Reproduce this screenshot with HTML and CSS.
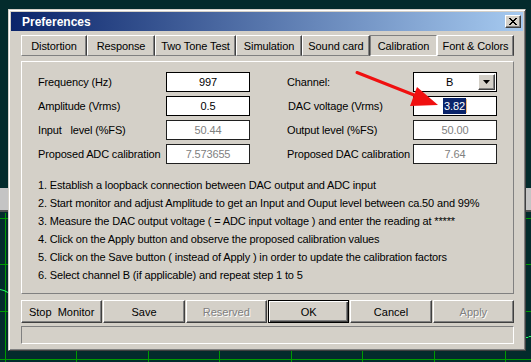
FILE: index.html
```html
<!doctype html>
<html lang="en">
<head>
  <meta charset="utf-8">
  <title>Preferences</title>
  <link rel="stylesheet" href="styles.css">
</head>
<body>
  <div class="desk">
    <svg class="scope" width="531" height="362" viewBox="0 0 531 362">
      <rect x="0" y="188" width="8" height="22" fill="#c4c4c4"/>
      <rect x="0" y="210" width="8" height="2" fill="#505050"/>
      <rect x="525" y="188" width="6" height="22" fill="#c4c4c4"/>
      <rect x="525" y="210" width="6" height="2" fill="#505050"/>
      <g stroke="#009a00" stroke-width="1">
        <line x1="0" y1="218.5" x2="531" y2="218.5"/>
        <line x1="0" y1="264.5" x2="531" y2="264.5"/>
        <line x1="0" y1="311.5" x2="531" y2="311.5"/>
        <line x1="0" y1="359.5" x2="531" y2="359.5"/>
        <line x1="5.5" y1="213" x2="5.5" y2="362"/>
        <line x1="76.5" y1="213" x2="76.5" y2="362"/>
        <line x1="148.5" y1="213" x2="148.5" y2="362"/>
        <line x1="219.5" y1="213" x2="219.5" y2="362"/>
        <line x1="291.5" y1="213" x2="291.5" y2="362"/>
        <line x1="362.5" y1="213" x2="362.5" y2="362"/>
        <line x1="434.5" y1="213" x2="434.5" y2="362"/>
        <line x1="505.5" y1="213" x2="505.5" y2="362"/>
      </g>
      <polyline points="0,289.5 4,290.5 8,292.5" fill="none" stroke="#22ff66" stroke-width="1"/>
      <polyline points="525,337.5 528,337.5 529,336.5 531,336.5" fill="none" stroke="#22ff66" stroke-width="1"/>
    </svg>

    <div class="dialog">
      <div class="titlebar">
        <span>Preferences</span>
        <span class="close">
          <svg width="8" height="7" viewBox="0 0 8 7"><path d="M0 0 L7 7 M1 0 L8 7 M7 0 L0 7 M8 0 L1 7" stroke="#000" stroke-width="1"/></svg>
        </span>
      </div>

      <div class="content">
        <div class="tabs">
          <div class="tab">Distortion</div>
          <div class="tab">Response</div>
          <div class="tab">Two Tone Test</div>
          <div class="tab">Simulation</div>
          <div class="tab">Sound card</div>
          <div class="tab active">Calibration</div>
          <div class="tab">Font &amp; Colors</div>
        </div>

        <div class="panel">
          <div class="fields">
            <label>Frequency (Hz)</label>
            <div class="edit">997</div>
            <label>Channel:</label>
            <div class="combo"><span class="combo-text">B</span><span class="drop"><svg width="7" height="4" viewBox="0 0 7 4"><path d="M0 0 H7 L3.5 4 Z" fill="#000"/></svg></span></div>

            <label>Amplitude (Vrms)</label>
            <div class="edit">0.5</div>
            <label class="pad">DAC voltage (Vrms)</label>
            <div class="edit"><span class="sel">3.82</span><span class="caret"></span></div>

            <label>Input &nbsp; level (%FS)</label>
            <div class="edit off">50.44</div>
            <label>Output level (%FS)</label>
            <div class="edit off">50.00</div>

            <label>Proposed ADC calibration</label>
            <div class="edit off">7.573655</div>
            <label>Proposed DAC calibration</label>
            <div class="edit off">7.64</div>
          </div>

          <ol class="steps">
            <li>1. Establish a loopback connection between DAC output and ADC input</li>
            <li>2. Start monitor and adjust Amplitude to get an Input and Ouput level between ca.50 and 99%</li>
            <li>3. Measure the DAC output voltage ( = ADC input voltage ) and enter the reading at *****</li>
            <li>4. Click on the Apply button and observe the proposed calibration values</li>
            <li>5. Click on the Save button ( instead of Apply ) in order to update the calibration factors</li>
            <li>6. Select channel B (if applicable) and repeat step 1 to 5</li>
          </ol>
        </div>

        <div class="buttons">
          <div class="btn">Stop &nbsp;Monitor</div>
          <div class="btn">Save</div>
          <div class="btn off">Reserved</div>
          <div class="btn default">OK</div>
          <div class="btn">Cancel</div>
          <div class="btn off">Apply</div>
        </div>

        <div class="status"></div>
      </div>
    </div>

    <svg class="arrow" width="531" height="362" viewBox="0 0 531 362">
      <path d="M357 72.5 L414 95" stroke="#f01010" stroke-width="3" stroke-linecap="round"/>
      <polygon points="417,87 410,106 438,105" fill="#f01010"/>
    </svg>
  </div>
</body>
</html>
```

FILE: styles.css
```css
* {
  box-sizing: border-box;
}

body {
  margin: 0;
  background: #032b2c;
  font-family: "Liberation Sans", Arial, sans-serif;
  font-size: 11px;
  color: #000;
}

.desk {
  position: relative;
  width: 531px;
  height: 362px;
  overflow: hidden;
  padding: 9px 0 0 8px;
}

.scope,
.arrow {
  position: absolute;
  left: 0;
  top: 0;
}

.arrow {
  pointer-events: none;
}

.dialog {
  position: relative;
  width: 518px;
  height: 342px;
  background: #d4d0c8;
  border: 1px solid;
  border-color: #d4d0c8 #404040 #404040 #d4d0c8;
  box-shadow: inset 1px 1px #fff, inset -1px -1px #808080;
  padding: 2px;
}

.titlebar {
  height: 19px;
  background: linear-gradient(to right, #0a246a, #a6caf0);
  color: #fff;
  font-weight: bold;
  font-size: 12px;
  display: flex;
  align-items: center;
  justify-content: space-between;
  padding: 0 2px 0 11px;
}

.close {
  width: 16px;
  height: 13px;
  background: #d4d0c8;
  border: 1px solid;
  border-color: #fff #404040 #404040 #fff;
  box-shadow: inset -1px -1px #808080;
  display: flex;
  align-items: center;
  justify-content: center;
}

.content {
  padding: 4px 9px 0 10px;
}

.tabs {
  display: grid;
  grid-template-columns: 66px 68px 81px 66px 68px 67px 77px;
  height: 21px;
}

.tab {
  display: flex;
  align-items: center;
  justify-content: center;
  border: 1px solid;
  border-color: #fff #404040 #808080 #fff;
  box-shadow: inset -1px 0 #808080;
  white-space: nowrap;
  letter-spacing: -0.1px;
}

.tab.active {
  border-color: #808080 #fff #fff #808080;
  box-shadow: none;
}

.panel {
  margin-top: 5px;
  height: 233px;
  border: 1px solid;
  border-color: #fff #808080 #808080 #fff;
  padding: 10px 17px 0 16px;
  letter-spacing: -0.15px;
}

.fields {
  display: grid;
  grid-template-columns: 128px 121px 126px 84px;
  grid-auto-rows: 20px;
  row-gap: 4px;
  align-items: center;
  white-space: nowrap;
}

.fields .pad {
  padding-left: 1px;
}

.edit {
  width: 84px;
  height: 20px;
  background: #fff;
  border: 1px solid #000;
  display: flex;
  align-items: center;
  justify-content: center;
}

.edit.off {
  border-color: #202020;
  color: #808080;
}

.sel {
  background: #0a246a;
  color: #fff;
  padding: 1px 1px;
  line-height: 14px;
}

.caret {
  width: 1px;
  height: 14px;
  background: #f0c080;
}

.combo {
  width: 84px;
  height: 20px;
  background: #fff;
  border: 1px solid #000;
  display: flex;
  align-items: center;
  padding-right: 1px;
}

.combo-text {
  flex: 1;
  text-align: center;
  padding-left: 7px;
}

.drop {
  width: 17px;
  height: 16px;
  background: #d4d0c8;
  border: 1px solid;
  border-color: #fff #404040 #404040 #fff;
  box-shadow: inset -1px -1px #808080;
  display: flex;
  align-items: center;
  justify-content: center;
}

.steps {
  margin: 12px 0 0;
  padding: 0;
  list-style: none;
  line-height: 18px;
  white-space: nowrap;
}

.buttons {
  margin-top: 6px;
  display: grid;
  grid-template-columns: repeat(6, 1fr);
  column-gap: 1px;
  height: 23px;
}

.btn {
  display: flex;
  align-items: center;
  justify-content: center;
  border: 1px solid;
  border-color: #fff #404040 #404040 #fff;
  box-shadow: inset -1px -1px #808080;
  font-size: 11px;
}

.btn.off {
  color: #808080;
  text-shadow: 1px 1px #fff;
}

.btn.default {
  border-color: #000;
  box-shadow: inset 1px 1px #fff, inset -1px -1px #404040, inset -2px -2px #808080;
}

.status {
  margin-top: 3px;
  height: 18px;
  border: 1px solid;
  border-color: #808080 #fff #fff #808080;
}
```
